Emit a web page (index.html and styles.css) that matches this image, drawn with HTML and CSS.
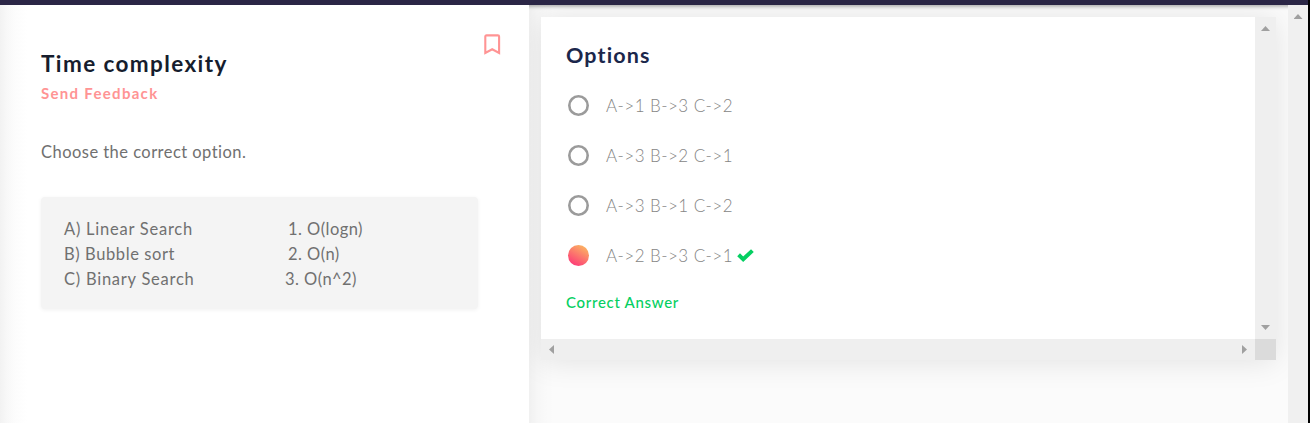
FILE: index.html
```html
<!DOCTYPE html>
<html lang="en">
<head>
<meta charset="utf-8">
<title>Time complexity</title>
<link rel="stylesheet" href="styles.css">
</head>
<body>
<div class="screen">
  <div class="window">
    <header class="topbar"></header>
    <main class="content">
      <section class="problem">
        <div class="problem-head">
          <div>
            <h1 class="title">Time complexity</h1>
            <a class="feedback">Send Feedback</a>
          </div>
          <svg class="bookmark" viewBox="0 0 17 21"><path d="M1.3 18.9V2.6Q1.3 1.4 2.5 1.4H13.9Q15.1 1.4 15.1 2.6V18.9L8.2 15.3Z" fill="none" stroke="#ff9494" stroke-width="2.1"/></svg>
        </div>
        <p class="prompt">Choose the correct option.</p>
        <div class="pairs">
          <div class="pair"><span class="algo linear">A) Linear Search</span><span class="cost logn">1. O(logn)</span></div>
          <div class="pair"><span class="algo bubble">B) Bubble sort</span><span class="cost n">2. O(n)</span></div>
          <div class="pair"><span class="algo binary">C) Binary Search</span><span class="cost square">3. O(n^2)</span></div>
        </div>
      </section>
      <section class="answers">
        <div class="card">
          <div class="card-body">
            <h2 class="heading">Options</h2>
            <div class="option"><i class="radio"></i><span class="label">A-&gt;1 B-&gt;3 C-&gt;2</span></div>
            <div class="option"><i class="radio"></i><span class="label">A-&gt;3 B-&gt;2 C-&gt;1</span></div>
            <div class="option"><i class="radio"></i><span class="label">A-&gt;3 B-&gt;1 C-&gt;2</span></div>
            <div class="option"><i class="radio selected"></i><span class="label">A-&gt;2 B-&gt;3 C-&gt;1</span><svg class="check" viewBox="0 0 17 13"><path d="M1.6 5.8L6.2 10.2L15.4 1.6" fill="none" stroke="#05cf62" stroke-width="4"/></svg></div>
            <p class="result">Correct Answer</p>
          </div>
          <div class="track vertical"><i class="arrow up"></i><i class="arrow down"></i></div>
          <div class="track horizontal"><i class="arrow left"></i><i class="arrow right"></i></div>
          <div class="corner"></div>
        </div>
      </section>
      <div class="page-track"><i class="arrow up"></i></div>
    </main>
  </div>
</div>
</body>
</html>
```
FILE: styles.css
```css
* { box-sizing: border-box; }
body { margin: 0; font-family: Lato, "Noto Sans", sans-serif; overflow: hidden; }
h1, h2, p { margin: 0; white-space: nowrap; }
svg, i { display: block; flex: none; }
.screen { height: 423px; background: #000; padding-right: 2px; overflow: hidden; }
.window { height: 423px; display: flex; flex-direction: column; background: #fbfbfb; overflow: hidden; }
.topbar { height: 5px; flex: none; background: #2b2646; box-shadow: 0 1px 4px rgba(0,0,0,.4); }
.content { flex: 1; display: flex; min-height: 0; }
.problem {
  width: 529px; padding: 28px 28px 0 41px; position: relative; z-index: 3;
  background: linear-gradient(90deg, #f2f2f2 0, #f8f8f8 7px, #fcfcfc 15px, #fff 27px);
}
.problem-head { display: flex; justify-content: space-between; }
.title { margin-top: 15px; font-size: 22.5px; line-height: 32px; font-weight: 700; letter-spacing: 1.4px; color: #161d2d; }
.feedback { display: block; font-size: 15px; line-height: 26px; font-weight: 700; letter-spacing: 1.3px; color: #ff9494; }
.bookmark { width: 17px; height: 21px; margin: 1px 0 0 0; }
.prompt { margin-top: 33px; font-size: 16.5px; line-height: 26px; letter-spacing: .46px; color: #707070; }
.pairs { width: 437px; height: 112px; margin-top: 32px; padding: 20px 22px 0 23px; border-radius: 4px; background: #f4f4f4; box-shadow: 0 1px 4px rgba(0,0,0,.06); }
.pair { display: flex; white-space: pre; font-size: 16.5px; line-height: 25px; letter-spacing: .45px; color: #707070; }
.algo { width: 224px; letter-spacing: .76px; }
.bubble { letter-spacing: .6px; }
.binary { width: 221px; }
.answers { flex: 1; padding: 12px; background: linear-gradient(90deg, rgba(0,0,0,.045), rgba(0,0,0,.02) 8px, rgba(0,0,0,.006) 16px, transparent 26px); }
.card {
  width: 735px; height: 343px; display: grid; grid-template: 322px 21px / 714px 21px;
  background: #efefef; box-shadow: 0 2px 28px rgba(0,0,0,.1);
}
.card-body { background: #fff; padding: 23px 25px 0; }
.heading { font-size: 21.5px; line-height: 31px; font-weight: 700; letter-spacing: 1.15px; color: #1b274b; margin-bottom: 9px; }
.option { height: 50px; display: flex; align-items: center; padding-left: 2px; }
.radio { width: 21px; height: 21px; border-radius: 50%; box-shadow: inset 0 0 0 2.6px #9b9b9b; margin-right: 17px; }
.selected { box-shadow: none; background: linear-gradient(30deg, #fd3179 5%, #fbb562 90%); }
.label { width: 131px; white-space: nowrap; font-size: 17px; font-weight: 300; letter-spacing: .45px; color: #858585; line-height: 26px; padding-top: 2px; }
.check { width: 17px; height: 13px; }
.result { margin-top: 9px; font-size: 15px; line-height: 26px; letter-spacing: .7px; font-weight: 500; color: #05cf62; }
.track { display: flex; justify-content: space-between; align-items: center; background: #efefef; }
.vertical { flex-direction: column; padding: 9px 0; }
.horizontal { padding: 0 8px; }
.corner { background: #dbdbdb; }
.page-track { width: 20px; background: #f0f0f0; padding-top: 9px; position: relative; z-index: 2; display: flex; flex-direction: column; align-items: center; }
.arrow { background: #a0a0a0; }
.up, .down { width: 9px; height: 5px; }
.left, .right { width: 5px; height: 9px; }
.up { clip-path: polygon(50% 0, 100% 100%, 0 100%); }
.down { clip-path: polygon(0 0, 100% 0, 50% 100%); }
.left { clip-path: polygon(100% 0, 100% 100%, 0 50%); }
.right { clip-path: polygon(0 0, 100% 50%, 0 100%); }
```
